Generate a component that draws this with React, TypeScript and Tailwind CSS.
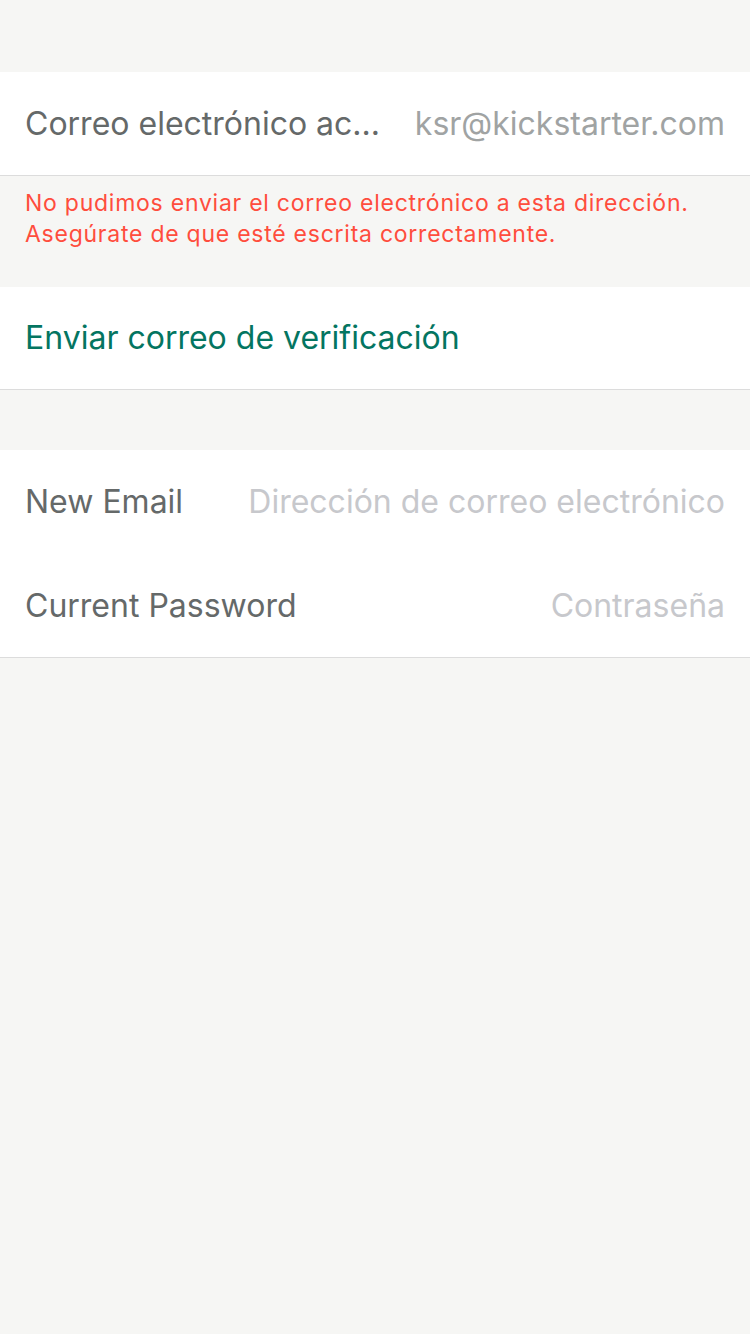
import React from "react";

const font = { fontFamily: "Inter, 'Liberation Sans', sans-serif" };

export default function App() {
  return (
    <div className="min-h-[1334px] w-[750px] bg-[#f6f6f4]" style={font}>
      <div className="h-[72px]" />

      {/* Current email */}
      <div className="flex h-[104px] items-center justify-between border-b border-[#dcdcdc] bg-white px-[25px]">
        <span className="text-[32px] text-[#656969]">Correo electrónico ac...</span>
        <span className="text-[32px] text-[#a0a3a3]">ksr@kickstarter.com</span>
      </div>

      {/* Error */}
      <div className="px-[25px] pt-[12px] pb-[37px] text-[23px] leading-[31px] tracking-[0.75px] text-[#ff4d3d]">
        <p>No pudimos enviar el correo electrónico a esta dirección.</p>
        <p>Asegúrate de que esté escrita correctamente.</p>
      </div>

      {/* Resend */}
      <div className="flex h-[103px] items-center border-b border-[#dcdcdc] bg-white px-[25px]">
        <span className="text-[32px] text-[#047561]">Enviar correo de verificación</span>
      </div>

      <div className="h-[60px]" />

      {/* Change email form */}
      <div className="border-b border-[#dcdcdc] bg-white">
        <div className="flex h-[104px] items-center justify-between px-[25px]">
          <span className="text-[32px] text-[#656969]">New Email</span>
          <span className="text-[32px] text-[#c7c8cc]">Dirección de correo electrónico</span>
        </div>
        <div className="flex h-[103px] items-center justify-between px-[25px]">
          <span className="text-[32px] text-[#656969]">Current Password</span>
          <span className="text-[32px] text-[#c7c8cc]">Contraseña</span>
        </div>
      </div>
    </div>
  );
}
